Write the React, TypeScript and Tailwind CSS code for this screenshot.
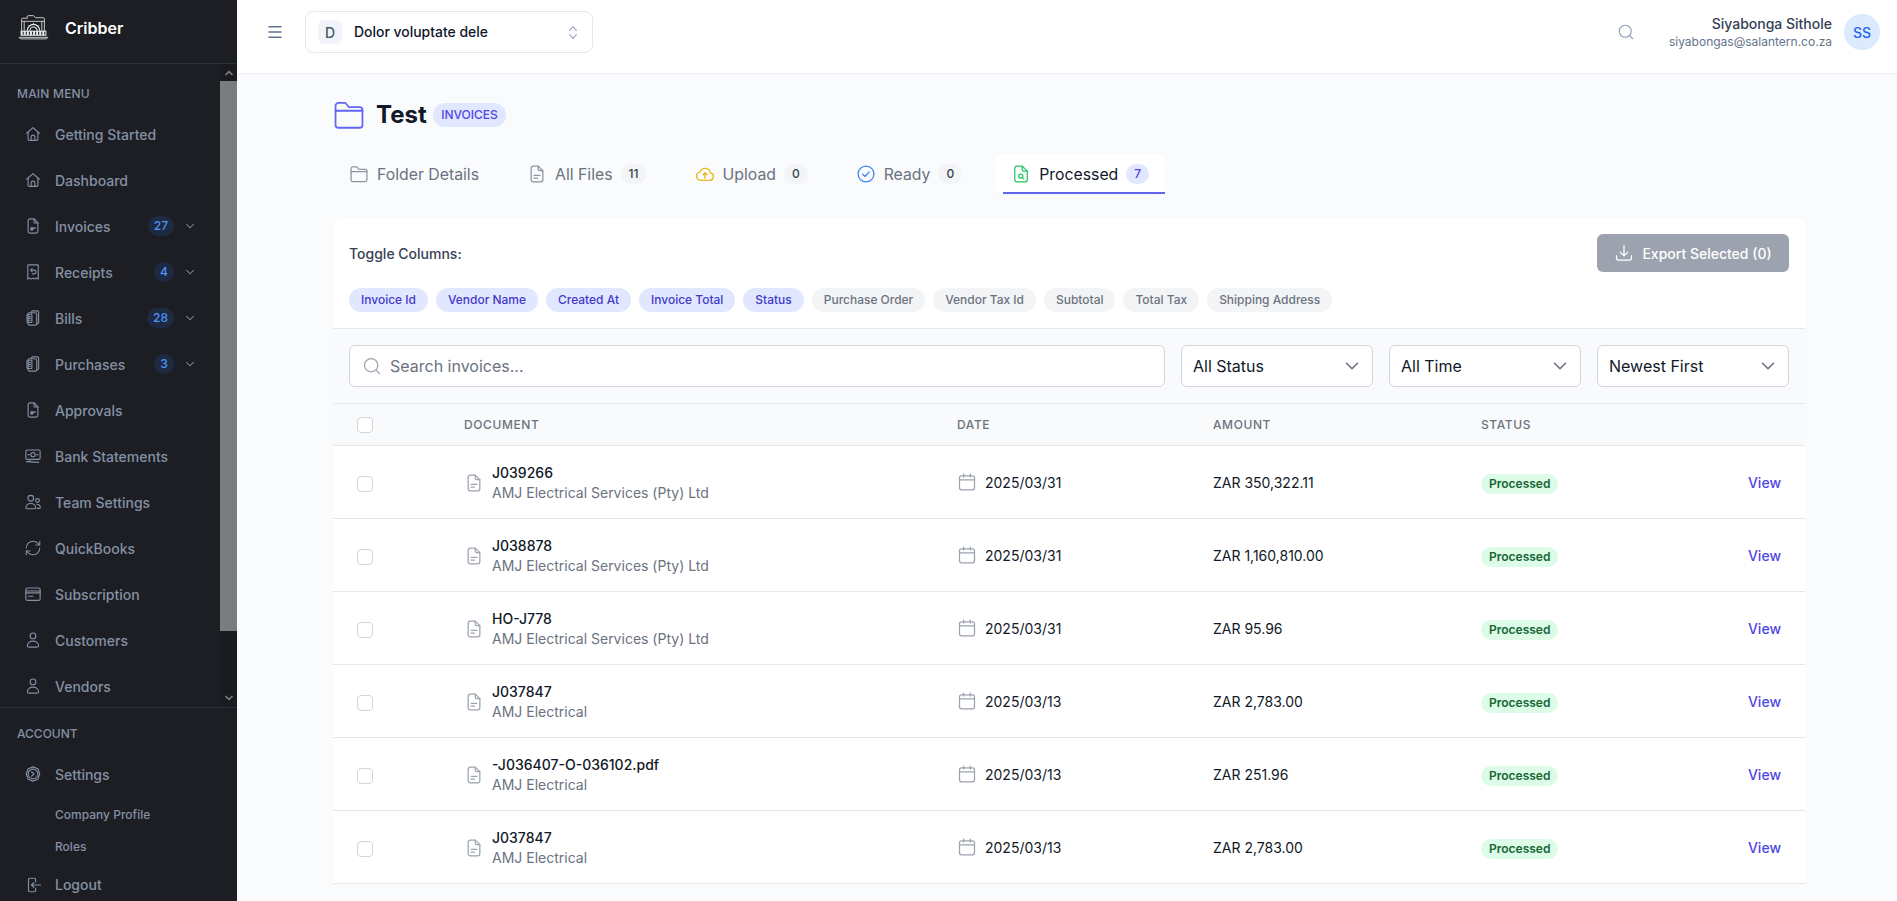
import React from "react";
import { ChevronDown, ChevronUp, Search, Menu, RefreshCw } from "lucide-react";

type P = { className?: string };
const Svg = ({ className, children, w = 1.5 }: P & { children: React.ReactNode; w?: number }) => (
  <svg viewBox="0 0 24 24" fill="none" stroke="currentColor" strokeWidth={w} strokeLinecap="round" strokeLinejoin="round" className={className}>
    {children}
  </svg>
);

const HomeI = (p: P) => <Svg {...p}><path d="M3.5 11 12 3.5 20.5 11" /><path d="M5.5 9.5V19a1.5 1.5 0 0 0 1.5 1.5h10a1.5 1.5 0 0 0 1.5-1.5V9.5" /><path d="M9.5 20.5V16a2.5 2.5 0 0 1 5 0v4.5" /></Svg>;
const InvoiceI = (p: P) => <Svg {...p}><path d="M13.5 2.5H8A2.5 2.5 0 0 0 5.5 5v14A2.5 2.5 0 0 0 8 21.5h8a2.5 2.5 0 0 0 2.5-2.5V8z" /><path d="M13.5 2.5V8h5" /><path d="M8.5 13.5h7v2h-3v2.5h-4z" fill="currentColor" stroke="none" /></Svg>;
const ReceiptI = (p: P) => <Svg {...p}><path d="M6 2.5h12a1 1 0 0 1 1 1v18l-2.3-1.5-2.3 1.5-2.4-1.5-2.4 1.5L7.3 20 5 21.5v-18a1 1 0 0 1 1-1z" /><path d="M9 9.5h4.5a2.5 2.5 0 0 1 0 5H11" /><path d="M10.8 7.5 9 9.5l1.8 2" /></Svg>;
const BillI = (p: P) => <Svg {...p}><path d="M10 5V4a1.5 1.5 0 0 1 1.5-1.5H18A1.5 1.5 0 0 1 19.5 4v14a1.5 1.5 0 0 1-1.5 1.5h-1" /><path d="M14.5 5H7A1.5 1.5 0 0 0 5.5 6.5V20A1.5 1.5 0 0 0 7 21.5h8.5A1.5 1.5 0 0 0 17 20V7.5A2.5 2.5 0 0 0 14.5 5z" /><rect x="4" y="7" width="6.5" height="11" rx="1" /><path d="M6 10h2.5M6 12.5h2.5M6 15h2.5" /></Svg>;
const BankI = (p: P) => <Svg {...p}><rect x="2.5" y="4" width="19" height="12.5" rx="1.5" /><circle cx="12" cy="10.2" r="2.8" /><path d="M5.5 10.2h1.5M17 10.2h1.5" /><path d="M3 19.5 19.5 20.5M8 17.5l-.3 2" /></Svg>;
const TeamI = (p: P) => <Svg {...p}><circle cx="9" cy="7" r="3.8" /><path d="M2.5 20c0-3.5 3-6 6.5-6s6.5 2.5 6.5 6c0 .8-1 1-2 1H4.5c-1 0-2-.2-2-1z" /><circle cx="18" cy="10" r="2.5" /><path d="M17.5 20.5H20c1 0 1.7-.4 1.7-1.3 0-2.3-1.8-4.2-4.7-4.2" /></Svg>;
const SubI = (p: P) => <Svg {...p}><rect x="2.5" y="4" width="19" height="16.5" rx="2" /><path d="M2.5 8h19M2.5 10.5h19M6 15h6" /></Svg>;
const UserI = (p: P) => <Svg {...p}><circle cx="12" cy="6.5" r="3.8" /><path d="M4.5 19.5c0-3.5 3.5-6 7.5-6s7.5 2.5 7.5 6c0 1.2-1 2-2.5 2H7c-1.5 0-2.5-.8-2.5-2z" /></Svg>;
const GearI = (p: P) => <Svg {...p} w={1.5}><path d="M12 2.5 18.5 5l2.5 7-2.5 7-6.5 2.5L5.5 19 3 12l2.5-7z" /><circle cx="12" cy="12" r="6.5" /><path d="m10 9 3.5 3-3.5 3" /></Svg>;
const LogoutI = (p: P) => <Svg {...p}><path d="M15.5 8V4.5A1.5 1.5 0 0 0 14 3H7.5A1.5 1.5 0 0 0 6 4.5v15A1.5 1.5 0 0 0 7.5 21H14a1.5 1.5 0 0 0 1.5-1.5V16" /><path d="M22 12H10.5M13 9l-3 3 3 3" /></Svg>;
const FolderI = (p: P & { w?: number }) => <Svg className={p.className} w={p.w ?? 1.5}><path d="M2.5 7V5.5a2 2 0 0 1 2-2h5l2.5 3h7.5a2 2 0 0 1 2 2V19a2 2 0 0 1-2 2h-15a2 2 0 0 1-2-2V7z" /><path d="M2.5 9h19" /></Svg>;
const DocI = (p: P) => <Svg {...p}><path d="M13.5 2.5h-6A2.5 2.5 0 0 0 5 5v14a2.5 2.5 0 0 0 2.5 2.5h9A2.5 2.5 0 0 0 19 19V8z" /><path d="M13.5 2.5V6a2 2 0 0 0 2 2H19" /><path d="M8.5 13.5h7M8.5 17h4" /></Svg>;
const CloudI = (p: P) => <Svg {...p}><path d="M7 19.5a5 5 0 0 1-1-9.9 6.5 6.5 0 0 1 12.5 1 4.5 4.5 0 0 1-1 8.9z" /><path d="M12 17v-6M9.5 13l2.5-2.5 2.5 2.5" /></Svg>;
const CheckI = (p: P) => <Svg {...p}><circle cx="12" cy="12" r="9.5" /><path d="m8 12.3 2.8 2.7L16 9.5" /></Svg>;
const ProcI = (p: P) => <Svg {...p}><path d="M13.5 2.5H7A2.5 2.5 0 0 0 4.5 5v14A2.5 2.5 0 0 0 7 21.5h10a2.5 2.5 0 0 0 2.5-2.5V8.500z" /><path d="M13.5 2.5V7A1.5 1.5 0 0 0 15 8.5h4.5" /><circle cx="11.7" cy="14.5" r="2.5" /><path d="m13.5 16.3 1.5 1.5" /></Svg>;
const CalI = (p: P) => <Svg {...p}><rect x="3" y="4.5" width="18" height="17" rx="2.5" /><path d="M3 9.5h18M8 2.5V6M16 2.5V6" /></Svg>;
const DownloadI = (p: P) => <Svg {...p}><path d="M12 3v12M7.5 11l4.5 4.5 4.5-4.5" /><path d="M3 15.5V18a2.5 2.5 0 0 0 2.5 2.5h13A2.5 2.5 0 0 0 21 18v-2.500" /></Svg>;

const Logo = () => (
  <svg viewBox="0 0 30 26" fill="none" stroke="#e5e7eb" strokeWidth="0.8" className="w-[31px] h-[27px]">
    <path d="M3.5 20V6a1 1 0 0 1 1-1H9V3.5a1 1 0 0 1 1-1h5l2 2h7.5a1 1 0 0 1 1 1V20" />
    <path d="M3.5 8h22M23 8v12M6 8v12" />
    <path d="M9 17a6 6 0 0 1 12 0M11.5 17a3.5 3.5 0 0 1 7 0" strokeWidth="1.1" />
    <path d="M15 9.5V11M10 12l1 1M20 12l-1 1" />
    <rect x="2.5" y="17" width="25" height="5" fill="#e5e7eb" stroke="none" />
    <path d="M5 18v3M8 18v3M11 18v3M14 18v3M17 18v3M20 18v3M23 18v3M26 18v3" stroke="#1c1e24" strokeWidth="1" />
    <path d="M1 23.5h28L27.5 25h-25z" />
  </svg>
);

type Item = { label: string; icon: (p: P) => React.ReactElement; badge?: string; chev?: boolean };
const items: Item[] = [
  { label: "Getting Started", icon: HomeI },
  { label: "Dashboard", icon: HomeI },
  { label: "Invoices", icon: InvoiceI, badge: "27", chev: true },
  { label: "Receipts", icon: ReceiptI, badge: "4", chev: true },
  { label: "Bills", icon: BillI, badge: "28", chev: true },
  { label: "Purchases", icon: BillI, badge: "3", chev: true },
  { label: "Approvals", icon: InvoiceI },
  { label: "Bank Statements", icon: BankI },
  { label: "Team Settings", icon: TeamI },
  { label: "QuickBooks", icon: (p: P) => <RefreshCw className={p.className} strokeWidth={1.4} /> },
  { label: "Subscription", icon: SubI },
  { label: "Customers", icon: UserI },
  { label: "Vendors", icon: UserI },
];

const NavRow = ({ item }: { item: Item }) => (
  <div className="h-[46px] shrink-0 flex items-center pl-[24px] pr-[24px] text-[14px] font-medium text-[#8490a3]">
    <item.icon className="w-[18px] h-[18px] mr-[13px] shrink-0" />
    <span className="flex-1">{item.label}</span>
    {item.badge && (
      <span className="min-w-[20px] h-[20px] px-[6px] rounded-full bg-[#1e2a42] text-[#4f94f5] text-[12px] flex items-center justify-center">{item.badge}</span>
    )}
    {item.chev && <ChevronDown className="w-[14px] h-[14px] ml-[9px] -mr-[1px]" strokeWidth={1.8} />}
  </div>
);

const Sidebar = () => (
  <aside className="w-[237px] shrink-0 h-full bg-[#1c1e24] flex flex-col">
    <div className="h-[64px] shrink-0 border-b border-[#2a3040] flex items-start pt-[13px] pl-[18px]">
      <Logo />
      <span className="ml-[16px] mt-[3px] text-[16px] font-semibold text-white">Cribber</span>
    </div>
    <div className="h-[643px] shrink-0 flex">
      <nav className="flex-1 min-w-0 overflow-hidden">
        <div className="pl-[17px] pt-[21px] h-[47px] text-[12px] font-medium uppercase text-[#8490a3] tracking-[0.2px]">Main Menu</div>
        {items.map((i) => <NavRow key={i.label} item={i} />)}
      </nav>
      <div className="w-[17px] shrink-0 bg-[#191b20] flex flex-col text-[#7b7c80]">
        <div className="h-[17px] flex items-center justify-center"><ChevronUp className="w-[12px] h-[12px]" strokeWidth={3.5} /></div>
        <div className="h-[550px] bg-[#7b7c80]" />
        <div className="flex-1 flex items-end justify-center pb-[3px]"><ChevronDown className="w-[12px] h-[12px]" strokeWidth={3.5} /></div>
      </div>
    </div>
    <div className="flex-1 border-t border-[#2a3040]">
      <div className="pl-[17px] pt-[17px] h-[47px] text-[12px] font-medium uppercase text-[#8490a3]">Account</div>
      <div className="h-[38px] flex items-center pl-[24px] text-[14px] font-medium text-[#8490a3]">
        <GearI className="w-[18px] h-[18px] mr-[13px]" />Settings
      </div>
      <div className="h-[32px] flex items-center pl-[55px] mt-[6px] text-[12px] font-medium text-[#8490a3]">Company Profile</div>
      <div className="h-[32px] flex items-center pl-[55px] text-[12px] font-medium text-[#8490a3]">Roles</div>
      <div className="h-[43px] flex items-center pl-[24px] text-[14px] font-medium text-[#8490a3]">
        <LogoutI className="w-[18px] h-[18px] mr-[13px]" />Logout
      </div>
    </div>
  </aside>
);

const TopBar = () => (
  <header className="h-[73px] shrink-0 pb-[9px] bg-white shadow-[0_1px_3px_rgba(15,23,42,0.06)] flex items-center relative z-10">
    <Menu className="w-[18px] h-[18px] ml-[29px] text-[#64748b]" strokeWidth={2} />
    <div className="ml-[21px] w-[288px] h-[42px] border border-[#e2e8f0] rounded-lg flex items-center pl-[12px] pr-[12px]">
      <span className="w-[24px] h-[24px] rounded-md bg-[#f1f5f9] text-[#475569] text-[14px] font-medium flex items-center justify-center">D</span>
      <span className="ml-[12px] flex-1 text-[13.95px] font-medium text-[#0f172a]">Dolor voluptate dele</span>
      <svg viewBox="0 0 12 18" fill="none" stroke="#94a3b8" strokeWidth="1.3" strokeLinecap="round" strokeLinejoin="round" className="w-[10px] h-[15px] mr-[2px]"><path d="M2 6.5 6 2l4 4.5M2 11.5 6 16l4-4.5" /></svg>
    </div>
    <div className="flex-1" />
    <Search className="w-[18px] h-[18px] text-[#94a3b8]" strokeWidth={1.5} />
    <div className="ml-[34px] text-right">
      <div className="text-[14px] leading-[20px] font-medium text-[#334155]">Siyabonga Sithole</div>
      <div className="text-[12px] leading-[16px] text-[#64748b]">siyabongas@salantern.co.za</div>
    </div>
    <span className="ml-[12px] mr-[17px] w-[36px] h-[36px] rounded-full bg-[#dbeafe] text-[#2563eb] text-[14px] font-medium flex items-center justify-center">SS</span>
  </header>
);

type Tab = { label: string; icon: (p: P) => React.ReactElement; iconCls: string; count?: string };
const tabs: Tab[] = [
  { label: "Folder Details", icon: (p) => <FolderI {...p} />, iconCls: "text-[#8b93a1]" },
  { label: "All Files", icon: DocI, iconCls: "text-[#8b93a1]", count: "11" },
  { label: "Upload", icon: CloudI, iconCls: "text-[#eab308]", count: "0" },
  { label: "Ready", icon: CheckI, iconCls: "text-[#3b82f6]", count: "0" },
];

const TabBar = () => (
  <div className="flex gap-4 h-[40px] mt-[26px]">
    {tabs.map((t) => (
      <div key={t.label} className="h-[40px] px-4 flex items-center">
        <t.icon className={`w-[20px] h-[20px] mr-2 ${t.iconCls}`} />
        <span className="text-[15.8px] mt-[1px] text-[#6b7280]">{t.label}</span>
        {t.count && <span className="ml-2 h-[20px] px-2 rounded-full bg-[#f3f4f6] text-[#374151] text-[12px] font-medium flex items-center justify-center">{t.count}</span>}
      </div>
    ))}
    <div className="relative ml-[1px] h-[40px] px-4 flex items-center bg-white rounded-lg shadow-[0_1px_2px_rgba(0,0,0,0.03)]">
      <ProcI className="w-[20px] h-[20px] mr-2 text-[#22c55e]" />
      <span className="text-[15.8px] mt-[1px] text-[#111827]">Processed</span>
      <span className="ml-2 h-[20px] px-2 rounded-full bg-[#e0e7ff] text-[#4f46e5] text-[12px] font-medium flex items-center justify-center">7</span>
      <span className="absolute left-[8px] right-0 bottom-0 h-[2px] bg-[#6366f1]" />
    </div>
  </div>
);

const onChips = ["Invoice Id", "Vendor Name", "Created At", "Invoice Total", "Status"];
const offChips = ["Purchase Order", "Vendor Tax Id", "Subtotal", "Total Tax", "Shipping Address"];

const Select = ({ label }: { label: string }) => (
  <div className="w-[192px] h-[42px] bg-white border border-[#d1d5db] rounded-md flex items-center justify-between pl-[11px] pr-[9px] text-[16px] text-[#111827]">
    {label}
    <ChevronDown className="w-[22px] h-[22px] text-[#6b7280]" strokeWidth={1.7} />
  </div>
);

const rows = [
  ["J039266", "AMJ Electrical Services (Pty) Ltd", "2025/03/31", "ZAR 350,322.11"],
  ["J038878", "AMJ Electrical Services (Pty) Ltd", "2025/03/31", "ZAR 1,160,810.00"],
  ["HO-J778", "AMJ Electrical Services (Pty) Ltd", "2025/03/31", "ZAR 95.96"],
  ["J037847", "AMJ Electrical", "2025/03/13", "ZAR 2,783.00"],
  ["-J036407-O-036102.pdf", "AMJ Electrical", "2025/03/13", "ZAR 251.96"],
  ["J037847", "AMJ Electrical", "2025/03/13", "ZAR 2,783.00"],
];

const Box = () => <span className="block w-[16px] h-[16px] rounded-[4px] border border-[#d1d5db] bg-white" />;

const Card = () => (
  <section className="mt-6 bg-white rounded-t-lg">
    <div className="h-[111px] px-4 pt-4 border-b border-[#e5e7eb]">
      <div className="flex items-center justify-between h-[38px]">
        <span className="text-[14px] font-medium text-[#374151]">Toggle Columns:</span>
        <button className="w-[192px] h-[38px] rounded-md bg-[#9ca3af] text-white text-[14px] font-medium flex items-center justify-center">
          <DownloadI className="w-[20px] h-[20px] mr-2" />Export Selected (0)
        </button>
      </div>
      <div className="flex gap-2 mt-4">
        {onChips.map((c) => <span key={c} className="h-[24px] px-3 rounded-full bg-[#e0e7ff] text-[#4338ca] text-[11.98px] font-medium flex items-center">{c}</span>)}
        {offChips.map((c) => <span key={c} className="h-[24px] px-3 rounded-full bg-[#f3f4f6] text-[#6b7280] text-[11.98px] font-medium flex items-center">{c}</span>)}
      </div>
    </div>
    <div className="h-[75px] px-4 bg-[#f9fafb] border-b border-[#e5e7eb] flex items-center gap-4">
      <div className="flex-1 h-[42px] bg-white border border-[#d1d5db] rounded-md flex items-center pl-[12px] text-[16px] text-[#6b7280]">
        <Search className="w-[20px] h-[20px] mr-[8px] text-[#9ca3af]" strokeWidth={1.5} />Search invoices...
      </div>
      <Select label="All Status" />
      <Select label="All Time" />
      <Select label="Newest First" />
    </div>
    <table className="w-full table-fixed border-separate border-spacing-0">
      <colgroup>
        <col className="w-[107px]" />
        <col className="w-[493px]" />
        <col className="w-[256px]" />
        <col className="w-[268px]" />
        <col />
      </colgroup>
      <thead>
        <tr className="text-[12px] font-medium uppercase tracking-[0.6px] text-[#6b7280] text-left">
          {[<Box key="b" />, "Document", "Date", "Amount", "Status"].map((h, i) => (
            <th key={i} className="h-[42px] pl-6 bg-[#f9fafb] border-b border-[#e5e7eb] font-medium">{h}</th>
          ))}
        </tr>
      </thead>
      <tbody>
        {rows.map((r, i) => (
          <tr key={i}>
            <td className="h-[73px] pl-6 border-b border-[#e5e7eb]"><div className="pt-[4px]"><Box /></div></td>
            <td className="h-[73px] pl-6 border-b border-[#e5e7eb]">
              <div className="flex items-center pt-[2px]">
                <DocI className="w-[20px] h-[20px] mr-[8px] text-[#9ca3af] shrink-0" />
                <div>
                  <div className="text-[14px] leading-[20px] font-medium text-[#111827]">{r[0]}</div>
                  <div className="text-[14px] leading-[20px] text-[#6b7280]">{r[1]}</div>
                </div>
              </div>
            </td>
            <td className="h-[73px] pl-6 border-b border-[#e5e7eb]">
              <div className="flex items-center text-[14px] text-[#111827]">
                <CalI className="w-[20px] h-[20px] mr-2 text-[#9ca3af]" />{r[2]}
              </div>
            </td>
            <td className="h-[73px] pl-6 border-b border-[#e5e7eb] text-[14px] text-[#111827]">{r[3]}</td>
            <td className="h-[73px] pl-6 pr-6 border-b border-[#e5e7eb]">
              <div className="flex items-center justify-between">
                <span className="relative top-[1px] inline-flex items-center h-[20px] px-2 rounded-full bg-[#dcfce7] text-[#166534] text-[12px] font-semibold mt-[2px]">Processed</span>
                <span className="text-[14px] font-medium text-[#4f46e5]">View</span>
              </div>
            </td>
          </tr>
        ))}
      </tbody>
    </table>
  </section>
);

export default function App() {
  return (
    <div className="w-[1897px] h-[901px] overflow-hidden flex bg-[#fafbfd] font-['Inter',sans-serif]">
      <Sidebar />
      <div className="flex-1 min-w-0 h-full flex flex-col">
        <TopBar />
        <main className="flex-1 overflow-hidden pl-24">
          <div className="w-[1472px] pt-[29px]">
            <div className="flex items-center h-[26px]">
              <FolderI className="w-[34px] h-[34px] -ml-[1px] text-[#6366f1]" w={1.25} />
              <h1 className="ml-[10px] text-[24px] font-bold text-[#111827]">Test</h1>
              <span className="ml-[6px] h-[24px] px-[8.5px] rounded-full bg-[#e0e7ff] text-[#4f46e5] text-[12px] font-medium flex items-center">INVOICES</span>
            </div>
            <TabBar />
            <Card />
          </div>
        </main>
      </div>
    </div>
  );
}
